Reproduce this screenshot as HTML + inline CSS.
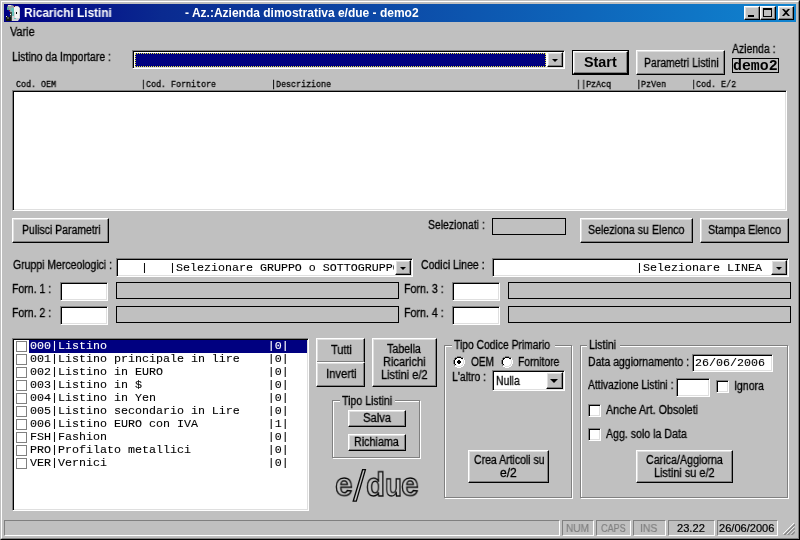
<!DOCTYPE html>
<html><head><meta charset="utf-8">
<style>
*{box-sizing:border-box;margin:0;padding:0}
html,body{width:800px;height:540px;overflow:hidden;background:#c0c0c0}
body{position:relative;font-family:"Liberation Sans",sans-serif;font-size:12px;color:#000}
.a{position:absolute}
.t{position:absolute;white-space:pre;line-height:14px;height:14px;transform-origin:0 0;will-change:transform}
.s12{font:12px/14px "Liberation Sans",sans-serif;-webkit-text-stroke:.3px}
.b12{font:bold 12px/14px "Liberation Sans",sans-serif}
.b14{font:bold 14px/14px "Liberation Sans",sans-serif}
.s11{font:11px/14px "Liberation Sans",sans-serif;-webkit-text-stroke:.2px}
.m12{font:11.67px/13px "Liberation Mono",monospace;height:13px;-webkit-text-stroke:.1px}
.m9{font:9.5px/12px "Liberation Mono",monospace;height:12px;transform:scaleX(.8772);-webkit-text-stroke:.3px}
.btn{position:absolute;background:#c0c0c0;border:1px solid;border-color:#fff #000 #000 #fff;box-shadow:inset -1px -1px 0 #808080,inset 1px 1px 0 #dfdfdf}
.sunk{position:absolute;border:1px solid;border-color:#808080 #fff #fff #808080;box-shadow:inset 1px 1px 0 #000, inset -1px -1px 0 #dfdfdf}
.w{background:#fff}
.grp{position:absolute;border:1px solid #808080;box-shadow:inset 1px 1px 0 #fff,1px 1px 0 #fff}
.cb{position:absolute;width:13px;height:13px;background:#fff;border:1px solid;border-color:#808080 #fff #fff #808080;box-shadow:inset 1px 1px 0 #000, inset -1px -1px 0 #dfdfdf}
.fcb{position:absolute;width:11px;height:11px;background:#fff;border:1px solid #808080}
.dd{position:absolute;width:16px;background:#c0c0c0;border:1px solid;border-color:#fff #000 #000 #fff;box-shadow:inset -1px -1px 0 #808080,inset 1px 1px 0 #dfdfdf}
.dd:after{content:"";position:absolute;left:4px;top:50%;margin-top:-1px;border:3px solid transparent;border-top:3px solid #000;border-bottom:0}
.flat{position:absolute;border:1px solid #000}
.dd.big:after{left:3px;margin-top:-2px;border-width:4px 4px 0 4px;border-top-color:#000}
.sp{position:absolute;height:16px;border:1px solid;border-color:#808080 #fff #fff #808080}
</style></head><body>
<!-- window frame -->
<div class="a" style="left:0;top:0;width:800px;height:540px;border:1px solid;border-color:#c0c0c0 #000 #000 #c0c0c0"></div>
<div class="a" style="left:1px;top:1px;width:798px;height:538px;border:1px solid;border-color:#fff #808080 #808080 #fff"></div>
<!-- title bar -->
<div class="a" style="left:4px;top:4px;width:792px;height:18px;background:linear-gradient(90deg,#000084 0%,#0a2a90 20%,#1084d0 100%)"></div>
<svg class="a" style="left:6px;top:5px" width="16" height="16" viewBox="0 0 16 16"><path d="M6 1h6l2 2v10l-2 3H6z" fill="#d4d4d8"/><path d="M2 0h4l2 1v6H4L1 3z" fill="#98a4a4"/><path d="M2 0h3v1H2z" fill="#f0d8d8"/><path d="M5 3h3v8H6V6H5z" fill="#68c0b8"/><path d="M1 2h1v1h1v1H2v1H1z" fill="#50b090"/><path d="M4 7h2v9H4z" fill="#404840"/><path d="M0 11h2v1h3v4H0z" fill="#101410"/><path d="M1 12h2v2H1z" fill="#485048"/><path d="M8 2h5v11H9V7H8z" fill="#f2f2f2"/><rect x="10" y="7" width="1" height="2" fill="#000"/><rect x="4" y="9" width="1" height="1" fill="#fff"/><rect x="0" y="11" width="1" height="1" fill="#e0e0e0"/><rect x="8" y="13" width="2" height="1" fill="#70c8c0"/><rect x="3" y="5" width="1" height="1" fill="#a01020"/><rect x="8" y="1" width="1" height="1" fill="#800818"/></svg>
<!-- caption buttons -->
<div class="btn" style="left:744px;top:6px;width:16px;height:14px"><div class="a" style="left:3px;top:8px;width:6px;height:2px;background:#000"></div></div>
<div class="btn" style="left:760px;top:6px;width:16px;height:14px"><div class="a" style="left:2px;top:1px;width:9px;height:9px;border:1px solid #000;border-top-width:2px"></div></div>
<div class="btn" style="left:778px;top:6px;width:16px;height:14px"><svg class="a" style="left:3px;top:2px" width="8" height="7" viewBox="0 0 8 7"><path d="M0 0h2l2 2 2-2h2L5 3.5 8 7H6L4 5 2 7H0l3-3.500z" fill="#000"/></svg></div>

<!-- listino combo -->
<div class="sunk w" style="left:132px;top:50px;width:433px;height:19px"></div>
<div class="a" style="left:135px;top:53px;width:411px;height:14px;background:#000080;outline:1px dotted #e0e040;outline-offset:-1px"></div>
<div class="dd" style="left:547px;top:52px;height:15px"></div>
<!-- Start -->
<div class="a" style="left:572px;top:50px;width:57px;height:25px;border:1px solid #000"></div>
<div class="btn" style="left:573px;top:51px;width:55px;height:23px"></div>
<div class="btn" style="left:636px;top:50px;width:89px;height:25px"></div>
<div class="a" style="left:732px;top:58px;width:47px;height:15px;border:1px solid #000"></div>
<div class="t" style="left:732.98px;top:58px;height:auto;font:bold 14.5px/16px 'Liberation Mono',monospace;transform:scaleX(1.0238);">demo2</div>

<div class="t m9" style="left:16px;top:79px">Cod. OEM                 |Cod. Fornitore           |Descrizione                                                 ||PzAcq     |PzVen     |Cod. E/2</div>
<div class="sunk w" style="left:12px;top:90px;width:775px;height:121px"></div>

<div class="btn" style="left:12px;top:218px;width:97px;height:25px"></div>
<div class="flat" style="left:492px;top:218px;width:74px;height:17px"></div>
<div class="btn" style="left:580px;top:218px;width:113px;height:25px"></div>
<div class="btn" style="left:700px;top:218px;width:89px;height:25px"></div>

<div class="sunk w" style="left:116px;top:258px;width:297px;height:19px"></div>
<div class="a" style="left:119px;top:261px;width:275px;height:14px;overflow:hidden"><div class="t m12" style="left:1px;top:1px">   |   |Selezionare GRUPPO o SOTTOGRUPPO</div></div>
<div class="dd" style="left:395px;top:260px;height:15px"></div>
<div class="sunk w" style="left:492px;top:258px;width:297px;height:19px"></div>
<div class="t m12" style="left:636px;top:262px">|Selezionare LINEA</div>
<div class="dd" style="left:771px;top:260px;height:15px"></div>

<div class="sunk w" style="left:60px;top:282px;width:48px;height:19px"></div>
<div class="flat" style="left:116px;top:282px;width:283px;height:17px"></div>
<div class="sunk w" style="left:60px;top:306px;width:48px;height:19px"></div>
<div class="flat" style="left:116px;top:306px;width:283px;height:17px"></div>
<div class="sunk w" style="left:452px;top:282px;width:48px;height:19px"></div>
<div class="flat" style="left:508px;top:282px;width:283px;height:17px"></div>
<div class="sunk w" style="left:452px;top:306px;width:48px;height:19px"></div>
<div class="flat" style="left:508px;top:306px;width:283px;height:17px"></div>

<!-- list -->
<div class="sunk w" style="left:12px;top:338px;width:297px;height:173px"></div>
<div class="a" style="left:29px;top:340px;width:278px;height:13px;background:#000080"></div>
<div class="fcb" style="left:16px;top:341px"></div><div class="t m12" style="left:30px;top:340px;color:#fff">000|Listino                       |0|</div>
<div class="fcb" style="left:16px;top:354px"></div><div class="t m12" style="left:30px;top:353px">001|Listino principale in lire    |0|</div>
<div class="fcb" style="left:16px;top:367px"></div><div class="t m12" style="left:30px;top:366px">002|Listino in EURO               |0|</div>
<div class="fcb" style="left:16px;top:380px"></div><div class="t m12" style="left:30px;top:379px">003|Listino in $                  |0|</div>
<div class="fcb" style="left:16px;top:393px"></div><div class="t m12" style="left:30px;top:392px">004|Listino in Yen                |0|</div>
<div class="fcb" style="left:16px;top:406px"></div><div class="t m12" style="left:30px;top:405px">005|Listino secondario in Lire    |0|</div>
<div class="fcb" style="left:16px;top:419px"></div><div class="t m12" style="left:30px;top:418px">006|Listino EURO con IVA          |1|</div>
<div class="fcb" style="left:16px;top:432px"></div><div class="t m12" style="left:30px;top:431px">FSH|Fashion                       |0|</div>
<div class="fcb" style="left:16px;top:445px"></div><div class="t m12" style="left:30px;top:444px">PRO|Profilato metallici           |0|</div>
<div class="fcb" style="left:16px;top:458px"></div><div class="t m12" style="left:30px;top:457px">VER|Vernici                       |0|</div>

<div class="btn" style="left:316px;top:338px;width:49px;height:25px"></div>
<div class="btn" style="left:316px;top:362px;width:49px;height:25px"></div>
<div class="btn" style="left:372px;top:338px;width:65px;height:49px"></div>

<div class="grp" style="left:332px;top:400px;width:88px;height:58px"></div>
<div class="a" style="left:340px;top:398px;width:55px;height:6px;background:#c0c0c0"></div>
<div class="btn" style="left:348px;top:410px;width:58px;height:17px"></div>
<div class="btn" style="left:348px;top:434px;width:58px;height:17px"></div>

<div class="t" style="left:334.59px;top:466.31px;height:auto;font:bold 35px/40px 'Liberation Sans',sans-serif;color:#c4c4c4;-webkit-text-stroke:1.4px #080808;transform:scale(0.9056,0.9238)">e</div><div class="t" style="left:365.92px;top:465.92px;height:auto;font:bold 35px/40px 'Liberation Sans',sans-serif;color:#c4c4c4;-webkit-text-stroke:1.4px #080808;transform:scale(0.8842,0.9357)">d</div><div class="t" style="left:384.71px;top:466.94px;height:auto;font:bold 35px/40px 'Liberation Sans',sans-serif;color:#c4c4c4;-webkit-text-stroke:1.4px #080808;transform:scale(0.7895,0.9048)">u</div><div class="t" style="left:400.89px;top:466.31px;height:auto;font:bold 35px/40px 'Liberation Sans',sans-serif;color:#c4c4c4;-webkit-text-stroke:1.4px #080808;transform:scale(0.9056,0.9238)">e</div><svg class="a" style="left:350px;top:466px" width="20" height="40" viewBox="350 466 20 40"><polygon points="362.6,469.7 365.4,469.7 356.3,501.2 353.2,501.2" fill="#c4c4c4" stroke="#080808" stroke-width="1.3"/></svg>

<div class="grp" style="left:444px;top:345px;width:128px;height:153px"></div>
<div class="a" style="left:452px;top:343px;width:103px;height:6px;background:#c0c0c0"></div>
<div class="sunk w" style="left:492px;top:370px;width:73px;height:21px"></div>
<div class="dd big" style="left:546px;top:372px;height:17px;width:17px"></div>
<div class="btn" style="left:468px;top:450px;width:81px;height:33px"></div>

<div class="grp" style="left:580px;top:345px;width:208px;height:153px"></div>
<div class="a" style="left:587px;top:343px;width:33px;height:6px;background:#c0c0c0"></div>
<div class="sunk w" style="left:692px;top:354px;width:81px;height:18px"></div>
<div class="t m12" style="left:695px;top:357px">26/06/2006</div>
<div class="sunk w" style="left:676px;top:378px;width:34px;height:19px"></div>
<div class="cb" style="left:716px;top:380px"></div>
<div class="cb" style="left:588px;top:404px"></div>
<div class="cb" style="left:588px;top:428px"></div>
<div class="btn" style="left:636px;top:450px;width:97px;height:33px"></div>

<!-- radios -->
<svg class="a" style="left:453px;top:356px" width="12" height="12" viewBox="0 0 12 12" shape-rendering="crispEdges"><rect x="4" y="0" width="4" height="1" fill="#808080"/><rect x="2" y="1" width="2" height="1" fill="#808080"/><rect x="4" y="1" width="4" height="1" fill="#000"/><rect x="8" y="1" width="2" height="1" fill="#808080"/><rect x="1" y="2" width="1" height="1" fill="#808080"/><rect x="2" y="2" width="2" height="1" fill="#000"/><rect x="4" y="2" width="4" height="1" fill="#fff"/><rect x="8" y="2" width="2" height="1" fill="#000"/><rect x="10" y="2" width="1" height="1" fill="#fff"/><rect x="1" y="3" width="1" height="1" fill="#808080"/><rect x="2" y="3" width="1" height="1" fill="#000"/><rect x="3" y="3" width="6" height="1" fill="#fff"/><rect x="9" y="3" width="1" height="1" fill="#dfdfdf"/><rect x="10" y="3" width="1" height="1" fill="#fff"/><rect x="0" y="4" width="1" height="1" fill="#808080"/><rect x="1" y="4" width="1" height="1" fill="#000"/><rect x="2" y="4" width="3" height="1" fill="#fff"/><rect x="5" y="4" width="2" height="1" fill="#000"/><rect x="7" y="4" width="3" height="1" fill="#fff"/><rect x="10" y="4" width="1" height="1" fill="#dfdfdf"/><rect x="11" y="4" width="1" height="1" fill="#fff"/><rect x="0" y="5" width="1" height="1" fill="#808080"/><rect x="1" y="5" width="1" height="1" fill="#000"/><rect x="2" y="5" width="2" height="1" fill="#fff"/><rect x="4" y="5" width="4" height="1" fill="#000"/><rect x="8" y="5" width="2" height="1" fill="#fff"/><rect x="10" y="5" width="1" height="1" fill="#dfdfdf"/><rect x="11" y="5" width="1" height="1" fill="#fff"/><rect x="0" y="6" width="1" height="1" fill="#808080"/><rect x="1" y="6" width="1" height="1" fill="#000"/><rect x="2" y="6" width="2" height="1" fill="#fff"/><rect x="4" y="6" width="4" height="1" fill="#000"/><rect x="8" y="6" width="2" height="1" fill="#fff"/><rect x="10" y="6" width="1" height="1" fill="#dfdfdf"/><rect x="11" y="6" width="1" height="1" fill="#fff"/><rect x="0" y="7" width="1" height="1" fill="#808080"/><rect x="1" y="7" width="1" height="1" fill="#000"/><rect x="2" y="7" width="3" height="1" fill="#fff"/><rect x="5" y="7" width="2" height="1" fill="#000"/><rect x="7" y="7" width="3" height="1" fill="#fff"/><rect x="10" y="7" width="1" height="1" fill="#dfdfdf"/><rect x="11" y="7" width="1" height="1" fill="#fff"/><rect x="1" y="8" width="1" height="1" fill="#808080"/><rect x="2" y="8" width="1" height="1" fill="#000"/><rect x="3" y="8" width="6" height="1" fill="#fff"/><rect x="9" y="8" width="1" height="1" fill="#dfdfdf"/><rect x="10" y="8" width="1" height="1" fill="#fff"/><rect x="1" y="9" width="1" height="1" fill="#808080"/><rect x="2" y="9" width="2" height="1" fill="#dfdfdf"/><rect x="4" y="9" width="4" height="1" fill="#fff"/><rect x="8" y="9" width="2" height="1" fill="#dfdfdf"/><rect x="10" y="9" width="1" height="1" fill="#fff"/><rect x="2" y="10" width="2" height="1" fill="#fff"/><rect x="4" y="10" width="4" height="1" fill="#dfdfdf"/><rect x="8" y="10" width="2" height="1" fill="#fff"/><rect x="4" y="11" width="4" height="1" fill="#fff"/></svg>
<svg class="a" style="left:501px;top:356px" width="12" height="12" viewBox="0 0 12 12" shape-rendering="crispEdges"><rect x="4" y="0" width="4" height="1" fill="#808080"/><rect x="2" y="1" width="2" height="1" fill="#808080"/><rect x="4" y="1" width="4" height="1" fill="#000"/><rect x="8" y="1" width="2" height="1" fill="#808080"/><rect x="1" y="2" width="1" height="1" fill="#808080"/><rect x="2" y="2" width="2" height="1" fill="#000"/><rect x="4" y="2" width="4" height="1" fill="#fff"/><rect x="8" y="2" width="2" height="1" fill="#000"/><rect x="10" y="2" width="1" height="1" fill="#fff"/><rect x="1" y="3" width="1" height="1" fill="#808080"/><rect x="2" y="3" width="1" height="1" fill="#000"/><rect x="3" y="3" width="6" height="1" fill="#fff"/><rect x="9" y="3" width="1" height="1" fill="#dfdfdf"/><rect x="10" y="3" width="1" height="1" fill="#fff"/><rect x="0" y="4" width="1" height="1" fill="#808080"/><rect x="1" y="4" width="1" height="1" fill="#000"/><rect x="2" y="4" width="8" height="1" fill="#fff"/><rect x="10" y="4" width="1" height="1" fill="#dfdfdf"/><rect x="11" y="4" width="1" height="1" fill="#fff"/><rect x="0" y="5" width="1" height="1" fill="#808080"/><rect x="1" y="5" width="1" height="1" fill="#000"/><rect x="2" y="5" width="8" height="1" fill="#fff"/><rect x="10" y="5" width="1" height="1" fill="#dfdfdf"/><rect x="11" y="5" width="1" height="1" fill="#fff"/><rect x="0" y="6" width="1" height="1" fill="#808080"/><rect x="1" y="6" width="1" height="1" fill="#000"/><rect x="2" y="6" width="8" height="1" fill="#fff"/><rect x="10" y="6" width="1" height="1" fill="#dfdfdf"/><rect x="11" y="6" width="1" height="1" fill="#fff"/><rect x="0" y="7" width="1" height="1" fill="#808080"/><rect x="1" y="7" width="1" height="1" fill="#000"/><rect x="2" y="7" width="8" height="1" fill="#fff"/><rect x="10" y="7" width="1" height="1" fill="#dfdfdf"/><rect x="11" y="7" width="1" height="1" fill="#fff"/><rect x="1" y="8" width="1" height="1" fill="#808080"/><rect x="2" y="8" width="1" height="1" fill="#000"/><rect x="3" y="8" width="6" height="1" fill="#fff"/><rect x="9" y="8" width="1" height="1" fill="#dfdfdf"/><rect x="10" y="8" width="1" height="1" fill="#fff"/><rect x="1" y="9" width="1" height="1" fill="#808080"/><rect x="2" y="9" width="2" height="1" fill="#dfdfdf"/><rect x="4" y="9" width="4" height="1" fill="#fff"/><rect x="8" y="9" width="2" height="1" fill="#dfdfdf"/><rect x="10" y="9" width="1" height="1" fill="#fff"/><rect x="2" y="10" width="2" height="1" fill="#fff"/><rect x="4" y="10" width="4" height="1" fill="#dfdfdf"/><rect x="8" y="10" width="2" height="1" fill="#fff"/><rect x="4" y="11" width="4" height="1" fill="#fff"/></svg>

<!-- status bar -->
<div class="sp" style="left:4px;top:520px;width:556px"></div>
<div class="sp" style="left:562px;top:520px;width:32px"></div>
<div class="sp" style="left:596px;top:520px;width:35px"></div>
<div class="sp" style="left:633px;top:520px;width:33px"></div>
<div class="sp" style="left:668px;top:520px;width:47px"></div>
<div class="sp" style="left:717px;top:520px;width:61px"></div>
<svg class="a" style="left:783px;top:523px" width="12" height="12" viewBox="0 0 13 13"><path d="M12 0L0 12M12 4L4 12M12 8L8 12" stroke="#fff" stroke-width="1" fill="none"/><path d="M13 1L1 13M13 2L2 13M13 5L5 13M13 6L6 13M13 9L9 13M13 10L10 13" stroke="#808080" stroke-width="1" fill="none"/></svg>

<div class="t b12" style="left:23.62px;top:6px;transform:scaleX(0.9818);color:#fff">Ricarichi Listini</div>
<div class="t b12" style="left:185.40px;top:6px;transform:scaleX(0.9991);color:#fff">- Az.:Azienda dimostrativa e/due - demo2</div>
<div class="t s12" style="left:9.50px;top:25px;transform:scaleX(0.9074)">Varie</div>
<div class="t s12" style="left:11.72px;top:50px;transform:scaleX(0.8775)">Listino da Importare :</div>
<div class="t b14" style="left:583.57px;top:55px;transform:scaleX(1.0258)">Start</div>
<div class="t s12" style="left:643.73px;top:56px;transform:scaleX(0.8690)">Parametri Listini</div>
<div class="t s12" style="left:732.20px;top:42px;transform:scaleX(0.8694)">Azienda :</div>
<div class="t s12" style="left:21.73px;top:223px;transform:scaleX(0.8727)">Pulisci Parametri</div>
<div class="t s12" style="left:427.73px;top:218px;transform:scaleX(0.8687)">Selezionati :</div>
<div class="t s12" style="left:587.81px;top:223px;transform:scaleX(0.8870)">Seleziona su Elenco</div>
<div class="t s12" style="left:707.80px;top:223px;transform:scaleX(0.8975)">Stampa Elenco</div>
<div class="t s12" style="left:12.60px;top:258px;transform:scaleX(0.8726)">Gruppi Merceologici :</div>
<div class="t s12" style="left:420.60px;top:258px;transform:scaleX(0.8736)">Codici Linee :</div>
<div class="t s12" style="left:11.72px;top:282px;transform:scaleX(0.8767)">Forn. 1 :</div>
<div class="t s12" style="left:11.72px;top:306px;transform:scaleX(0.8767)">Forn. 2 :</div>
<div class="t s12" style="left:403.61px;top:282px;transform:scaleX(0.8907)">Forn. 3 :</div>
<div class="t s12" style="left:403.61px;top:306px;transform:scaleX(0.8907)">Forn. 4 :</div>
<div class="t s12" style="left:331.30px;top:343px;transform:scaleX(0.9091)">Tutti</div>
<div class="t s12" style="left:325.76px;top:367px;transform:scaleX(0.9387)">Inverti</div>
<div class="t s12" style="left:387.00px;top:342px;transform:scaleX(0.8895)">Tabella</div>
<div class="t s12" style="left:382.77px;top:355px;transform:scaleX(0.9250)">Ricarichi</div>
<div class="t s12" style="left:381.08px;top:368px;transform:scaleX(0.9184)">Listini e/2</div>
<div class="t s12" style="left:342.10px;top:394px;transform:scaleX(0.8804)">Tipo Listini</div>
<div class="t s12" style="left:362.56px;top:411px;transform:scaleX(0.9379)">Salva</div>
<div class="t s12" style="left:353.90px;top:435px;transform:scaleX(0.8959)">Richiama</div>
<div class="t s12" style="left:454.00px;top:338px;transform:scaleX(0.8598)">Tipo Codice Primario</div>
<div class="t s12" style="left:470.60px;top:355px;transform:scaleX(0.8407)">OEM</div>
<div class="t s12" style="left:517.84px;top:355px;transform:scaleX(0.8617)">Fornitore</div>
<div class="t s12" style="left:452.13px;top:370px;transform:scaleX(0.8730)">L'altro :</div>
<div class="t s12" style="left:495.93px;top:374px;transform:scaleX(0.8667)">Nulla</div>
<div class="t s12" style="left:473.50px;top:453px;transform:scaleX(0.8750)">Crea Articoli su</div>
<div class="t s12" style="left:500.00px;top:466px;transform:scaleX(1.0063)">e/2</div>
<div class="t s12" style="left:588.92px;top:338px;transform:scaleX(0.8828)">Listini</div>
<div class="t s12" style="left:588.02px;top:355px;transform:scaleX(0.8754)">Data aggiornamento :</div>
<div class="t s12" style="left:588.30px;top:378px;transform:scaleX(0.8606)">Attivazione Listini :</div>
<div class="t s12" style="left:734.02px;top:379px;transform:scaleX(0.8818)">Ignora</div>
<div class="t s12" style="left:606.00px;top:403px;transform:scaleX(0.8961)">Anche Art. Obsoleti</div>
<div class="t s12" style="left:606.00px;top:427px;transform:scaleX(0.8837)">Agg. solo la Data</div>
<div class="t s12" style="left:646.40px;top:453px;transform:scaleX(0.8930)">Carica/Aggiorna</div>
<div class="t s12" style="left:654.29px;top:466px;transform:scaleX(0.9077)">Listini su e/2</div>
<div class="t s11" style="left:565.89px;top:521px;transform:scaleX(0.9125);color:#808080">NUM</div>
<div class="t s11" style="left:601.20px;top:521px;transform:scaleX(0.8267);color:#808080">CAPS</div>
<div class="t s11" style="left:639.95px;top:521px;transform:scaleX(0.9471);color:#808080">INS</div>
<div class="t s11" style="left:676.70px;top:521px;transform:scaleX(1.0111)">23.22</div>
<div class="t s11" style="left:718.90px;top:521px;transform:scaleX(1.0055)">26/06/2006</div>
</body></html>
